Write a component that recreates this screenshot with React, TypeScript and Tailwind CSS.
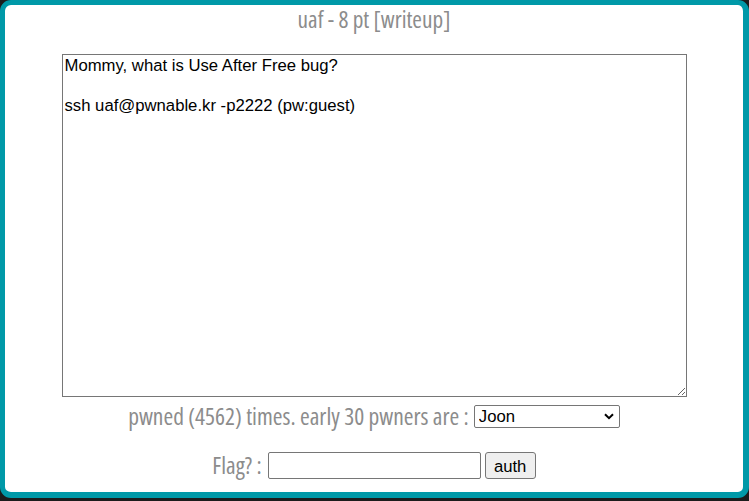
import { useState } from 'react';

const pwners = ['Joon', 'daehee', 'hyunmin', 'lokihardt', 'setuid0'];

export default function App() {
  const [flag, setFlag] = useState('');

  return (
    <div className="w-[749px] h-[501px] bg-[#1c1c1c] overflow-hidden">
      <div className="h-[498px] w-[749px] bg-white border-[#0099a8] border-t-[5px] border-l-[5px] border-r-[6px] border-b-[6px] rounded-[11px] flex flex-col items-center font-['Open_Sans',sans-serif] text-[#8c8c8c]">
        <div className="text-[23.3px] leading-[28px] font-stretch-condensed">
          uaf - 8 pt [writeup]
        </div>

        <textarea
          readOnly
          className="mt-[21px] w-[625px] h-[343px] shrink-0 border border-[#767676] px-[2px] pt-[1px] text-[16.7px] leading-[20px] text-black font-['Liberation_Sans',Arial,sans-serif] outline-none"
          defaultValue={'Mommy, what is Use After Free bug?\n\nssh uaf@pwnable.kr -p2222 (pw:guest)'}
        />

        <div className="mt-[5px] h-[28px] flex items-center gap-[5px] text-[23.5px] leading-[28px] font-stretch-condensed">
          <span>pwned (4562) times. early 30 pwners are :</span>
          <div className="relative">
            <select className="appearance-none block w-[146px] h-[23px] border border-[#767676] rounded-[2px] text-[16.7px] leading-[21px] text-black font-['Liberation_Sans',Arial,sans-serif] pl-[4px] bg-white font-stretch-normal">
              {pwners.map((p) => (
                <option key={p}>{p}</option>
              ))}
            </select>
            <svg
              className="absolute right-[6px] top-[8px] pointer-events-none"
              width="10"
              height="7"
              viewBox="0 0 10 7"
            >
              <path d="M1 1.2 L5 5.2 L9 1.2" fill="none" stroke="#000" strokeWidth="2" />
            </svg>
          </div>
        </div>

        <div className="mt-[21px] h-[28px] flex items-center text-[23.5px] leading-[28px] font-stretch-condensed">
          <span>Flag? :</span>
          <input
            value={flag}
            onChange={(e) => setFlag(e.target.value)}
            className="ml-[6px] w-[213px] h-[27px] border border-[#767676] rounded-[2px] px-[2px] text-[16.7px] text-black font-['Liberation_Sans',Arial,sans-serif] font-stretch-normal"
          />
          <button className="ml-[4px] w-[51px] h-[27px] border border-[#767676] rounded-[3px] bg-[#efefef] text-[16.7px] text-black font-['Liberation_Sans',Arial,sans-serif] font-stretch-normal">
            auth
          </button>
        </div>
      </div>
    </div>
  );
}
